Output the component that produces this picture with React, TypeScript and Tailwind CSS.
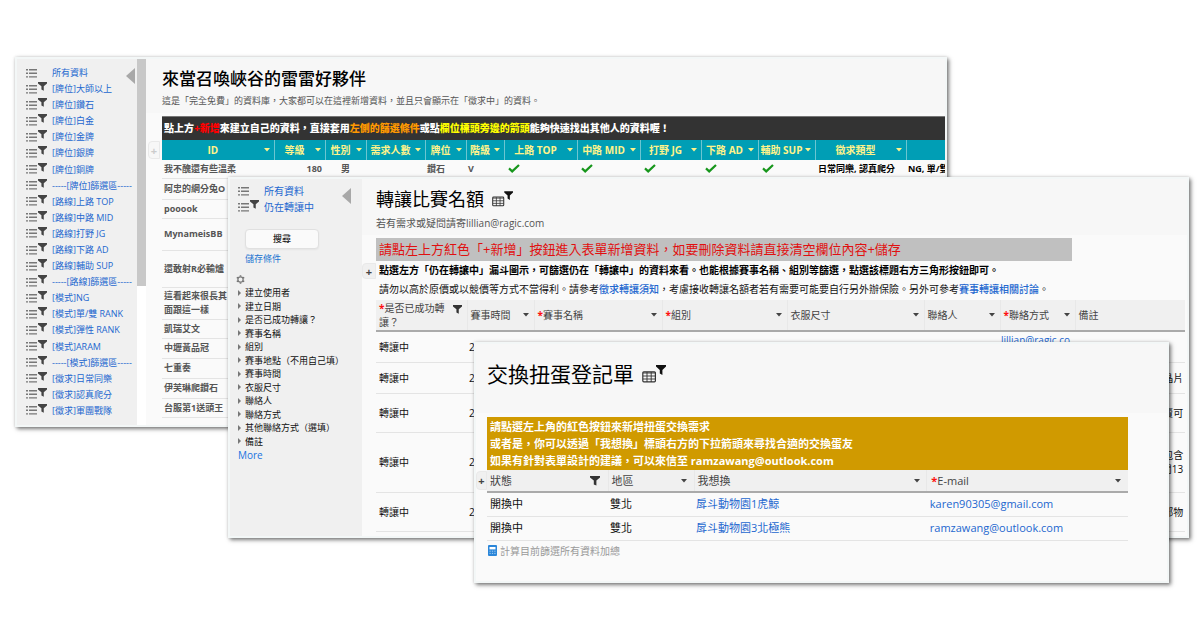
import type { ReactNode } from 'react';

type View = { label: string; filtered?: boolean };

const GAME_VIEWS: View[] = [
  { label: '所有資料' },
  ...[
    '[牌位]大師以上',
    '[牌位]鑽石',
    '[牌位]白金',
    '[牌位]金牌',
    '[牌位]銀牌',
    '[牌位]銅牌',
    '-----[牌位]篩選區-----',
    '[路線]上路 TOP',
    '[路線]中路 MID',
    '[路線]打野 JG',
    '[路線]下路 AD',
    '[路線]輔助 SUP',
    '-----[路線]篩選區-----',
    '[模式]NG',
    '[模式]單/雙 RANK',
    '[模式]彈性 RANK',
    '[模式]ARAM',
    '-----[模式]篩選區-----',
    '[徵求]日常同樂',
    '[徵求]認真爬分',
    '[徵求]軍團戰隊',
  ].map((label) => ({ label, filtered: true })),
];

const TICKET_VIEWS: View[] = [{ label: '所有資料' }, { label: '仍在轉讓中', filtered: true }];

const TREE = [
  '建立使用者',
  '建立日期',
  '是否已成功轉讓？',
  '賽事名稱',
  '組別',
  '賽事地點（不用自己填）',
  '賽事時間',
  '衣服尺寸',
  '聯絡人',
  '聯絡方式',
  '其他聯絡方式（選填）',
  '備註',
];

const GAME_COLS = [
  { label: 'ID', w: 'w-[112px]' },
  { label: '等級', w: 'w-[51px]' },
  { label: '性別', w: 'w-[41px]' },
  { label: '需求人數', w: 'w-[59px]' },
  { label: '牌位', w: 'w-[41px]' },
  { label: '階級', w: 'w-[38px]' },
  { label: '上路 TOP', w: 'w-[73px]' },
  { label: '中路 MID', w: 'w-[63px]' },
  { label: '打野 JG', w: 'w-[61px]' },
  { label: '下路 AD', w: 'w-[57px]' },
  { label: '輔助 SUP', w: 'w-[57px]' },
  { label: '徵求類型', w: 'w-[91px]' },
];

const PLAYERS = [
  { name: '阿忠的網分兔O', h: 'h-[21px]' },
  { name: 'pooook', h: 'h-[19px]' },
  { name: 'MynameisBB', h: 'h-[32px]' },
  { name: '還敢射R必輸爐', h: 'h-[37px]' },
  { name: '這看起來很長其\n面跟這一樣', h: 'h-[32px]' },
  { name: '凱瑞艾文', h: 'h-[19px]' },
  { name: '中壢黃品冠', h: 'h-[20px]' },
  { name: '七重奏', h: 'h-[20px]' },
  { name: '伊芙琳爬鑽石', h: 'h-[20px]' },
  { name: '台服第1送頭王', h: 'h-[19px]' },
];

const TICKET_COLS = [
  { label: '是否已成功轉讓？', w: 'w-[91px]', required: true, filtered: true },
  { label: '賽事時間', w: 'w-[67px]' },
  { label: '賽事名稱', w: 'w-[128px]', required: true },
  { label: '組別', w: 'w-[125px]', required: true },
  { label: '衣服尺寸', w: 'w-[137px]' },
  { label: '聯絡人', w: 'w-[76px]' },
  { label: '聯絡方式', w: 'w-[75px]', required: true },
];

const TICKETS = [
  { h: 'h-[31px]', contact: 'lillian@ragic.com', note: '' },
  { h: 'h-[31px]', contact: '', note: '晶片' },
  { h: 'h-[39px]', contact: '', note: '賣可' },
  { h: 'h-[60px]', contact: '', note: '包含\n間13' },
  { h: 'h-[39px]', contact: '', note: '部物' },
];

const SWAPS = [
  { want: '戽斗動物園1虎鯨', mail: 'karen90305@gmail.com' },
  { want: '戽斗動物園3北極熊', mail: 'ramzawang@outlook.com' },
];

const ListIcon = () => (
  <svg className="w-[11px] h-[9px] shrink-0 text-[#777]" viewBox="0 0 11 9" fill="currentColor" aria-hidden="true">
    <path d="M0 0h2v1.4H0zM3 0h8v1.4H3zM0 3.6h2V5H0zM3 3.6h8V5H3zM0 7.2h2v1.4H0zM3 7.2h8v1.4H3z" />
  </svg>
);

const Funnel = ({ className }: { className: string }) => (
  <svg className={`shrink-0 ${className}`} viewBox="0 0 10 10" fill="currentColor" aria-hidden="true">
    <path d="M0 0h10v1.6L6.4 4.6v5L3.8 8.4V4.6L0 1.6z" />
  </svg>
);

const Caret = ({ label, className = 'text-[#444]' }: { label: string; className?: string }) => (
  <button type="button" aria-label={`${label} 排序`} className={`shrink-0 ${className}`}>
    <svg className="w-[6px] h-[4px]" viewBox="0 0 6 4" fill="currentColor">
      <path d="M0 0h6L3 3.6z" />
    </svg>
  </button>
);

const Check = () => (
  <svg className="w-[12px] h-[9px]" viewBox="0 0 12 9" fill="none" stroke="#17961c" strokeWidth="2.2" role="img" aria-label="是">
    <path d="M1 4.4 4.2 7.4 11 1" />
  </svg>
);

const GridFunnel = ({ className }: { className: string }) => (
  <svg className={`shrink-0 ${className}`} viewBox="0 0 24 18" aria-hidden="true">
    <rect x="0.8" y="6.8" width="12.6" height="10" rx="1" fill="none" stroke="#333" strokeWidth="1.2" />
    <path d="M1 8h12.4M1 11h12.4M1 14h12.4M5 7v10M9.2 7v10" stroke="#333" strokeWidth="0.9" />
    <path d="M14 0h10v1.6L20.4 5v5L17.8 8.4V5L14 1.6z" fill="#111" />
  </svg>
);

const Collapse = ({ className }: { className: string }) => (
  <button type="button" aria-label="收合側欄" className={`absolute top-[9px] text-[#a8a8a8] ${className}`}>
    <svg className="w-[9px] h-[16px]" viewBox="0 0 9 16" fill="currentColor">
      <path d="M9 0v16L0 8z" />
    </svg>
  </button>
);

const ViewRow = ({ view }: { view: View }) => (
  <li className="flex items-center">
    <ListIcon />
    <span className="w-[15px] shrink-0 pl-px pb-[5px]">
      {view.filtered && <Funnel className="w-[9px] h-[9px] text-[#444]" />}
    </span>
    <a href="#" className="text-[#2367cf] whitespace-nowrap">{view.label}</a>
  </li>
);

const AddTab = ({ className }: { className: string }) => (
  <button
    type="button"
    aria-label="新增欄位"
    className={`flex items-center justify-center rounded-l-sm border border-[#e9e9e9] text-[11px] leading-none font-bold ${className}`}
  >
    +
  </button>
);

const Window = ({ className, children }: { className: string; children: ReactNode }) => (
  <section
    className={`absolute flex overflow-hidden border-2 border-[#f3f7f7] bg-[#fafafa] shadow-[2px_2px_4px_rgba(0,0,0,0.5),0_0_3px_rgba(0,0,0,0.15)] ${className}`}
  >
    {children}
  </section>
);

const Required = () => <span className="font-bold text-[#ff1010]">*</span>;

const GameWindow = () => (
  <Window className="left-[1.25%] right-[21.1%] top-[57px]">
    <nav className="relative w-[120px] shrink-0 bg-[#f0f0f0] pl-[9px] pt-[6px] pb-[6px]">
      <Collapse className="right-[2px]" />
      <ul className="grid h-[354px] auto-rows-fr text-[9px] leading-[16px]">
        {GAME_VIEWS.map((view) => <ViewRow key={view.label} view={view} />)}
      </ul>
    </nav>
    <div className="w-[9px] shrink-0 bg-white">
      <div className="h-[62%] bg-[#c8c8c8]" />
    </div>
    <div className="flex-1 min-w-0">
      <header className="bg-[#f7f7f7] pl-4 pt-2 pb-[5px]">
        <h2 className="text-[17px] leading-[24px] font-medium text-black">來當召喚峽谷的雷雷好夥伴</h2>
        <p className="mt-[3px] text-[9px] leading-[14px] text-[#555]">
          這是「完全免費」的資料庫，大家都可以在這裡新增資料，並且只會顯示在「徵求中」的資料。
        </p>
      </header>
      <div className="flex pt-[3px]">
        <div className="w-4 shrink-0 pl-[2px] pt-[25px]">
          <AddTab className="w-[12px] h-[18px] bg-[#f7f7f7] text-[#ccc]" />
        </div>
        <div className="flex-1 min-w-0">
          <p className="h-[24px] border-t border-[#777] bg-[#333] pl-[2px] text-[10px] leading-[23px] font-black text-white whitespace-nowrap">
            點上方<span className="text-[#ff0000]">+新增</span>來建立自己的資料，直接套用
            <span className="text-[#ff9900]">左側的篩選條件</span>或點
            <span className="text-[#ffff00]">欄位標頭旁邊的箭頭</span>能夠快速找出其他人的資料喔！
          </p>
          <table className="w-full table-fixed border-collapse text-[9px] leading-[14px] font-bold text-[#555]">
            <thead>
              <tr className="h-[20px] bg-[#009eb5] text-[10px] text-[#fff38a]">
                {GAME_COLS.map((col) => (
                  <th key={col.label} className={`border-r border-[#6cc5d1] p-0 ${col.w}`}>
                    <div className="flex items-center pr-1 whitespace-nowrap">
                      <span className="flex-1">{col.label}</span>
                      <Caret label={col.label} className="text-[#fff38a]" />
                    </div>
                  </th>
                ))}
                <th className="p-0" />
              </tr>
            </thead>
            <tbody>
              <tr className="h-[18px] border-b border-[#e4e4e4]">
                <td className="p-0 pl-[2px]">我不醜還有些溫柔</td>
                <td className="p-0 pr-[3px] text-right">180</td>
                <td className="p-0 text-center">男</td>
                <td className="p-0" />
                <td className="p-0 pl-[2px]">鑽石</td>
                <td className="p-0 pl-[2px]">V</td>
                {[0, 1, 2, 3, 4].map((lane) => (
                  <td key={lane} className="p-0 pl-1"><Check /></td>
                ))}
                <td className="p-0 pl-[3px] text-black whitespace-nowrap">日常同樂, 認真爬分</td>
                <td className="overflow-hidden p-0 pl-[2px] text-black whitespace-nowrap">NG, 單/雙</td>
              </tr>
              {PLAYERS.map((player) => (
                <tr key={player.name} className={`border-b border-[#e4e4e4] ${player.h}`}>
                  <td colSpan={13} className="p-0 pl-[2px] whitespace-pre-line">{player.name}</td>
                </tr>
              ))}
            </tbody>
          </table>
        </div>
      </div>
    </div>
  </Window>
);

const TicketWindow = () => (
  <Window className="left-[19%] right-[0.9%] top-[177px]">
    <aside className="relative w-[132px] shrink-0 bg-[#f0f0f0] pl-2 pt-1">
      <Collapse className="right-[11px]" />
      <ul className="grid auto-rows-fr text-[10px] leading-[16px]">
        {TICKET_VIEWS.map((view) => <ViewRow key={view.label} view={view} />)}
      </ul>
      <button
        type="button"
        className="ml-[7px] mt-[14px] block h-[20px] w-[74px] rounded-sm border border-[#e0e0e0] bg-[#fafafa] text-[9px] leading-[14px] font-medium text-[#222] shadow-xs"
      >
        搜尋
      </button>
      <a href="#" className="ml-[7px] mt-[3px] block text-[9px] leading-[14px] text-[#1a73d0]">儲存條件</a>
      <button type="button" aria-label="設定" className="-ml-[2px] mt-2 block h-[10px] text-[#777]">
        <svg className="size-[9px]" viewBox="0 0 10 10" fill="none" stroke="currentColor">
          <path d="M5 .2v1.6M5 8.2v1.6M.9 2.6l1.3.8M7.8 6.6l1.3.8M.9 7.4l1.3-.8M7.8 3.4l1.3-.8" strokeWidth="1.8" />
          <circle cx="5" cy="5" r="2.9" strokeWidth="1.4" />
        </svg>
      </button>
      <ul className="mt-[2px] grid h-[162px] auto-rows-fr text-[9px] leading-[13px] text-[#111]">
        {TREE.map((item) => (
          <li key={item} className="flex items-center gap-1 whitespace-nowrap">
            <svg className="w-[3px] h-[6px]" viewBox="0 0 3 6" fill="#777" aria-hidden="true">
              <path d="M0 0 3 3 0 6z" />
            </svg>
            {item}
          </li>
        ))}
      </ul>
      <a href="#" className="block text-[10px] leading-[14px] text-[#1a73e0]">More</a>
    </aside>
    <div className="flex-1 min-w-0">
      <header className="bg-[#f7f7f7] pl-[14px] pt-2 pb-[5px]">
        <h2 className="flex items-center gap-2 text-[18px] leading-[24px] text-black">
          轉讓比賽名額
          <GridFunnel className="w-[21px] h-[16px]" />
        </h2>
        <p className="mt-[5px] text-[10px] leading-[14px] text-[#555]">若有需求或疑問請寄lillian@ragic.com</p>
      </header>
      <div className="flex pt-[3px] pr-[2px] pb-1">
        <div className="w-[14px] shrink-0 pt-[25px]">
          <AddTab className="w-[14px] h-[16px] bg-[#f0f0f0] text-[#444]" />
        </div>
        <div className="flex-1 min-w-0">
          <p className="w-[86%] bg-[#c0c0c0] pl-[3px] text-[13px] leading-[23px] text-[#e01010] whitespace-nowrap">
            請點左上方紅色「+新增」按鈕進入表單新增資料，如要刪除資料請直接清空欄位內容+儲存
          </p>
          <p className="pl-[3px] text-[10px] leading-[19px] font-bold text-black whitespace-nowrap">
            點選左方「仍在轉讓中」漏斗圖示，可篩選仍在「轉讓中」的資料來看。也能根據賽事名稱、組別等篩選，點選該標題右方三角形按鈕即可。
          </p>
          <p className="pl-[3px] pb-px text-[10px] leading-[19px] text-[#111] whitespace-nowrap">
            請勿以高於原價或以競價等方式不當得利。請參考
            <a href="#" className="font-medium text-[#2367cf]">徵求轉讓須知</a>
            ，考慮接收轉讓名額者若有需要可能要自行另外辦保險。另外可參考
            <a href="#" className="font-medium text-[#2367cf]">賽事轉讓相關討論</a>。
          </p>
          <table className="w-full table-fixed border-collapse text-[10px] leading-[14px] text-[#111]">
            <thead>
              <tr className="h-[31px] border-b-2 border-[#aaa] bg-[#f0f0f0] text-left text-[#444]">
                {TICKET_COLS.map((col) => (
                  <th key={col.label} className={`border-r border-[#e8e8e8] p-0 pl-[3px] pr-[5px] font-normal ${col.w}`}>
                    <div className="flex items-center justify-between">
                      <span className={col.filtered ? 'w-[66px]' : ''}>
                        {col.required && <Required />}
                        {col.label}
                      </span>
                      {col.filtered ? (
                        <Funnel className="mb-3 w-[9px] h-[9px] text-[#333]" />
                      ) : (
                        <Caret label={col.label} />
                      )}
                    </div>
                  </th>
                ))}
                <th className="p-0 pl-[3px] font-normal">備註</th>
              </tr>
            </thead>
            <tbody>
              {TICKETS.map((row) => (
                <tr key={row.h + row.note} className={`border-b border-[#e4e4e4] ${row.h}`}>
                  <td className="p-0 pl-[3px]">轉讓中</td>
                  <td className="p-0 pl-[2px]">2</td>
                  <td colSpan={4} className="p-0" />
                  <td className="p-0 pl-px">
                    {row.contact && (
                      <a href="#" className="block break-all text-[#2367cf]">{row.contact}</a>
                    )}
                  </td>
                  <td className="p-0 pr-[2px] text-right whitespace-pre-line">{row.note}</td>
                </tr>
              ))}
            </tbody>
          </table>
        </div>
      </div>
    </div>
  </Window>
);

const SwapWindow = () => (
  <Window className="left-[39.5%] right-[2.6%] top-[342px]">
    <div className="flex-1 min-w-0">
      <header className="bg-[#f7f7f7] pl-[11px] pt-[15px] pb-[24px]">
        <h2 className="flex items-center gap-2 text-[21px] leading-[30px] text-black">
          交換扭蛋登記單
          <GridFunnel className="w-[24px] h-[18px]" />
        </h2>
      </header>
      <div className="flex pt-1 pr-[39px] pb-[23px]">
        <div className="w-[11px] shrink-0 pt-[54px]">
          <AddTab className="w-[11px] h-[19px] bg-[#f0f0f0] text-[#444]" />
        </div>
        <div className="flex-1 min-w-0">
          <p className="bg-[#d09a00] pl-[3px] py-px text-[11px] leading-[17px] font-bold text-white">
            請點選左上角的紅色按鈕來新增扭蛋交換需求
            <br />
            或者是，你可以透過「我想換」標頭右方的下拉箭頭來尋找合適的交換蛋友
            <br />
            如果有針對表單設計的建議，可以來信至 ramzawang@outlook.com
          </p>
          <table className="w-full table-fixed border-collapse text-[11px] leading-[16px] text-[#111]">
            <thead>
              <tr className="h-[22px] border-b-2 border-[#aaa] bg-[#f0f0f0] text-left text-[#444]">
                <th className="w-[121px] border-r border-[#e8e8e8] p-0 pl-[3px] pr-2 font-normal">
                  <div className="flex items-center justify-between">
                    狀態
                    <Funnel className="w-[10px] h-[10px] text-[#333]" />
                  </div>
                </th>
                <th className="w-[86px] border-r border-[#e8e8e8] p-0 pl-[3px] pr-[7px] font-normal">
                  <div className="flex items-center justify-between">
                    地區
                    <Caret label="地區" />
                  </div>
                </th>
                <th className="border-r border-[#e8e8e8] p-0 pl-[3px] pr-[6px] font-normal">
                  <div className="flex items-center justify-between">
                    我想換
                    <Caret label="我想換" />
                  </div>
                </th>
                <th className="w-[201px] p-0 pl-1 pr-[7px] font-normal">
                  <div className="flex items-center justify-between">
                    <span><Required />E-mail</span>
                    <Caret label="E-mail" />
                  </div>
                </th>
              </tr>
            </thead>
            <tbody>
              {SWAPS.map((swap) => (
                <tr key={swap.mail} className="h-[24px] border-b border-[#e4e4e4]">
                  <td className="p-0 pl-[3px]">開換中</td>
                  <td className="p-0 pl-[2px]">雙北</td>
                  <td className="p-0 pl-[2px]"><a href="#" className="text-[#2367cf]">{swap.want}</a></td>
                  <td className="p-0 pl-[3px]"><a href="#" className="text-[#2367cf]">{swap.mail}</a></td>
                </tr>
              ))}
            </tbody>
          </table>
          <button type="button" className="mt-[3px] flex items-center gap-[3px] pl-px text-[10px] leading-[14px] text-[#999]">
            <svg className="w-[9px] h-[11px]" viewBox="0 0 9 11" aria-hidden="true">
              <rect width="9" height="11" rx="1" fill="#2b86d9" />
              <path d="M1.5 2h6v2.4h-6z" fill="#fff" />
              <path d="M1.5 6.2h6M1.5 8.4h6" stroke="#a9d0f2" strokeDasharray="1.2 1.2" />
            </svg>
            計算目前篩選所有資料加總
          </button>
        </div>
      </div>
    </div>
  </Window>
);

const App = () => (
  <main className="relative min-h-screen bg-white font-['Open_Sans','Noto_Sans_CJK_TC',sans-serif]">
    <GameWindow />
    <TicketWindow />
    <SwapWindow />
  </main>
);

export default App;
